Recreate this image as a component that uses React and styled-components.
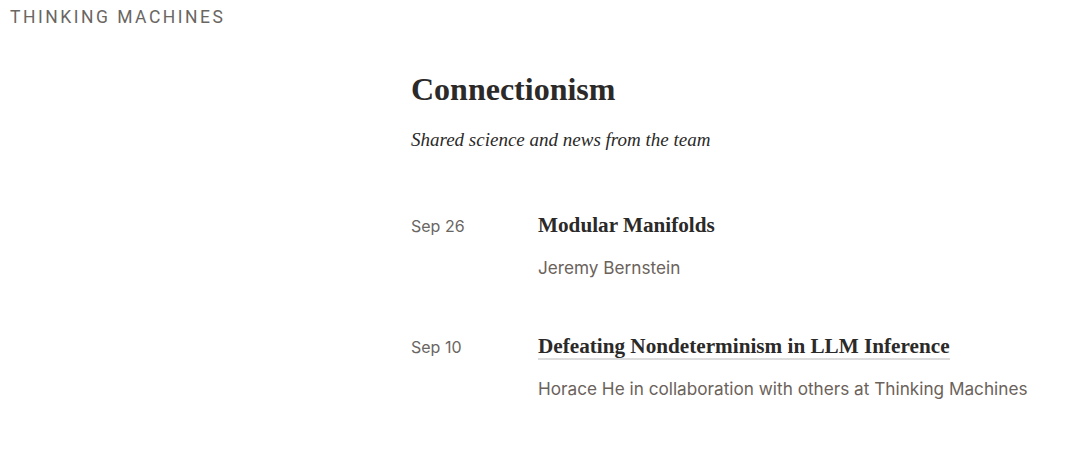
import styled, { createGlobalStyle } from "styled-components"

const Global = createGlobalStyle`
  body {
    margin: 0;
    background: #fff;
  }
`

const Page = styled.div`
  width: 1080px;
  height: 453px;
  overflow: hidden;
`

const Logo = styled.div`
  font-family: "Roboto", sans-serif;
  font-size: 17.5px;
  letter-spacing: 2.5px;
  color: #6a6662;
  padding: 8px 0 0 10px;
  line-height: 18px;
`

const Main = styled.main`
  margin-left: 411px;
  padding-top: 43px;
`

const Heading = styled.h1`
  font-family: "Liberation Serif", serif;
  font-size: 32px;
  font-weight: 700;
  color: #2b2a29;
  margin: 0;
  line-height: 40px;
`

const Tagline = styled.p`
  font-family: "Liberation Serif", serif;
  font-style: italic;
  font-size: 19px;
  color: #2b2a29;
  margin: 18px 0 0;
  line-height: 26px;
`

const List = styled.div`
  margin-top: 60px;
  display: flex;
  flex-direction: column;
  gap: 54px;
`

const Row = styled.div`
  display: grid;
  grid-template-columns: 127px 1fr;
`

const Date = styled.div`
  font-family: "Inter", sans-serif;
  font-size: 16px;
  color: #6a6662;
  line-height: 24px;
  padding-top: 1px;
`

const Title = styled.a`
  display: inline-block;
  font-family: "Liberation Serif", serif;
  font-weight: 700;
  font-size: 21.2px;
  color: #2b2a29;
  line-height: 24px;
  text-decoration: none;
  border-bottom: ${p => (p.$underline ? "2px solid #dcdcdc" : "2px solid transparent")};
`

const Author = styled.div`
  font-family: "Inter", sans-serif;
  font-size: 17.2px;
  color: #6b625b;
  margin-top: 17px;
  line-height: 24px;
`

const posts = [
  { date: "Sep 26", title: "Modular Manifolds", author: "Jeremy Bernstein" },
  {
    date: "Sep 10",
    title: "Defeating Nondeterminism in LLM Inference",
    author: "Horace He in collaboration with others at Thinking Machines",
    underline: true,
  },
]

const App = () => {
  return (
    <Page>
      <Global />
      <Logo>THINKING MACHINES</Logo>
      <Main>
        <Heading>Connectionism</Heading>
        <Tagline>Shared science and news from the team</Tagline>
        <List>
          {posts.map(p => (
            <Row key={p.title}>
              <Date>{p.date}</Date>
              <div>
                <Title $underline={p.underline}>{p.title}</Title>
                <Author>{p.author}</Author>
              </div>
            </Row>
          ))}
        </List>
      </Main>
    </Page>
  )
}

export default App
